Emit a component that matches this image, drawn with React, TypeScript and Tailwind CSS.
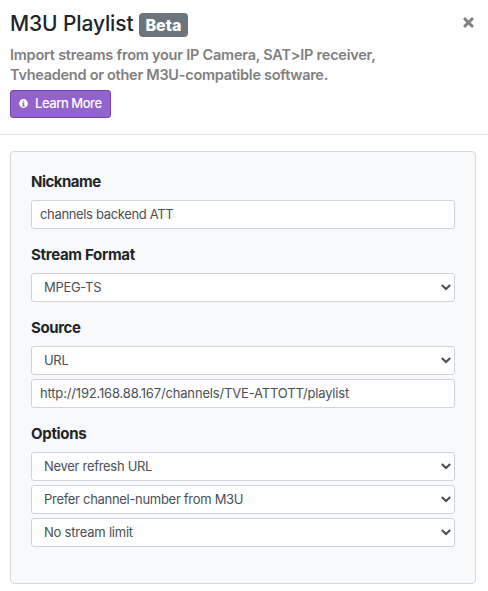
import { useState, type ReactNode } from 'react';
import { clsx } from 'clsx';

const control =
  'block h-[29px] w-full rounded-[3px] border border-[#ced4da] bg-white text-[13px] leading-[19px] text-[#495057] outline-none focus:border-[#80bdff]';

function InfoIcon() {
  return (
    <svg viewBox="0 0 9 9" className="mr-[7px] mb-px size-[9px] shrink-0">
      <circle cx="4.5" cy="4.5" r="4.4" fill="#fff" />
      <path d="M3.8 1.4h1.4v1.2H3.8z M3.2 3.5h2v2.9h.6v1H3.2v-1h.6V4.5h-.6z" fill="#9263cc" />
    </svg>
  );
}

function CloseIcon() {
  return (
    <svg viewBox="0 0 11 11" className="size-[11px]" stroke="currentColor" strokeWidth="3.1" strokeLinecap="round">
      <path d="M2 2 L9 9 M9 2 L2 9" />
    </svg>
  );
}

function Section({ label, className, children }: { label: string; className?: string; children: ReactNode }) {
  return (
    <section className="mb-4">
      <h6 className={clsx('mb-2 text-[15px] leading-5 font-bold text-[#212529]', className)}>{label}</h6>
      <div className="flex flex-col gap-1">{children}</div>
    </section>
  );
}

function TextInput({ initial, className }: { initial: string; className?: string }) {
  const [value, setValue] = useState(initial);

  return (
    <input
      type="text"
      value={value}
      onChange={(e) => setValue(e.target.value)}
      className={clsx(control, 'px-2 pb-[2px]', className)}
    />
  );
}

function Select({ option, className }: { option: string; className?: string }) {
  return (
    <div className="relative">
      <select className={clsx(control, 'appearance-none pr-6 pl-3', className)}>
        <option>{option}</option>
      </select>
      <svg
        viewBox="0 0 10 7"
        className="pointer-events-none absolute top-[11px] right-[4px] h-[7px] w-[10px]"
        fill="none"
        stroke="#495057"
        strokeWidth="2.1"
      >
        <path d="M0.8 1.1 L5 5.1 L9.2 1.1" />
      </svg>
    </div>
  );
}

export default function App() {
  return (
    <div className="h-[591px] w-[488px] overflow-hidden bg-white font-['Inter','Liberation_Sans',sans-serif]">
      <header className="flex h-[135px] items-start justify-between border-b border-[#dee2e6] pt-[10px] pr-[14px] pl-[10px]">
        <div>
          <h5 className="flex h-[27px] items-center text-[#212529]">
            <span className="w-[123px] text-[21px] leading-[27px] font-medium tracking-[-0.13px] whitespace-nowrap">
              M3U Playlist
            </span>
            <span className="mt-[3px] ml-[6px] flex h-6 w-[49px] items-center justify-center rounded bg-[#6c757d] text-[16px] leading-none font-extrabold tracking-[0.1px] text-white">
              Beta
            </span>
          </h5>
          <p className="mt-2 text-[14.5px] leading-5 font-semibold text-[#808080]">
            <span className="block tracking-[-0.23px] whitespace-nowrap">
              Import streams from your IP Camera, SAT&gt;IP receiver,
            </span>
            <span className="block tracking-[-0.27px] whitespace-nowrap">
              Tvheadend or other M3U-compatible software.
            </span>
          </p>
          <button className="mt-[5px] flex h-7 w-[101px] items-center rounded-[3px] border border-[#7a43b6] bg-[#9263cc] pl-2 text-[13px] font-medium text-white">
            <InfoIcon />
            <span className="tracking-[-0.45px] whitespace-nowrap">Learn More</span>
          </button>
        </div>
        <button aria-label="Close" className="mt-[7px] text-[#808080]">
          <CloseIcon />
        </button>
      </header>

      <main className="mt-4 ml-[10px] h-[433px] w-[466px] rounded border border-[#d5d8dc] bg-[#f8f9fb] p-5">
        <Section label="Nickname" className="tracking-[-0.5px]">
          <TextInput initial="channels backend ATT" className="tracking-[-0.34px]" />
        </Section>
        <Section label="Stream Format" className="tracking-[-0.3px]">
          <Select option="MPEG-TS" className="tracking-[-0.3px]" />
        </Section>
        <Section label="Source" className="tracking-[-0.4px]">
          <Select option="URL" className="tracking-[-0.3px]" />
          <TextInput initial="http://192.168.88.167/channels/TVE-ATTOTT/playlist" className="tracking-[-0.17px]" />
        </Section>
        <Section label="Options" className="tracking-[-0.3px]">
          <Select option="Never refresh URL" className="tracking-[-0.3px]" />
          <Select option="Prefer channel-number from M3U" className="tracking-[-0.3px]" />
          <Select option="No stream limit" className="tracking-[-0.22px]" />
        </Section>
      </main>
    </div>
  );
}
